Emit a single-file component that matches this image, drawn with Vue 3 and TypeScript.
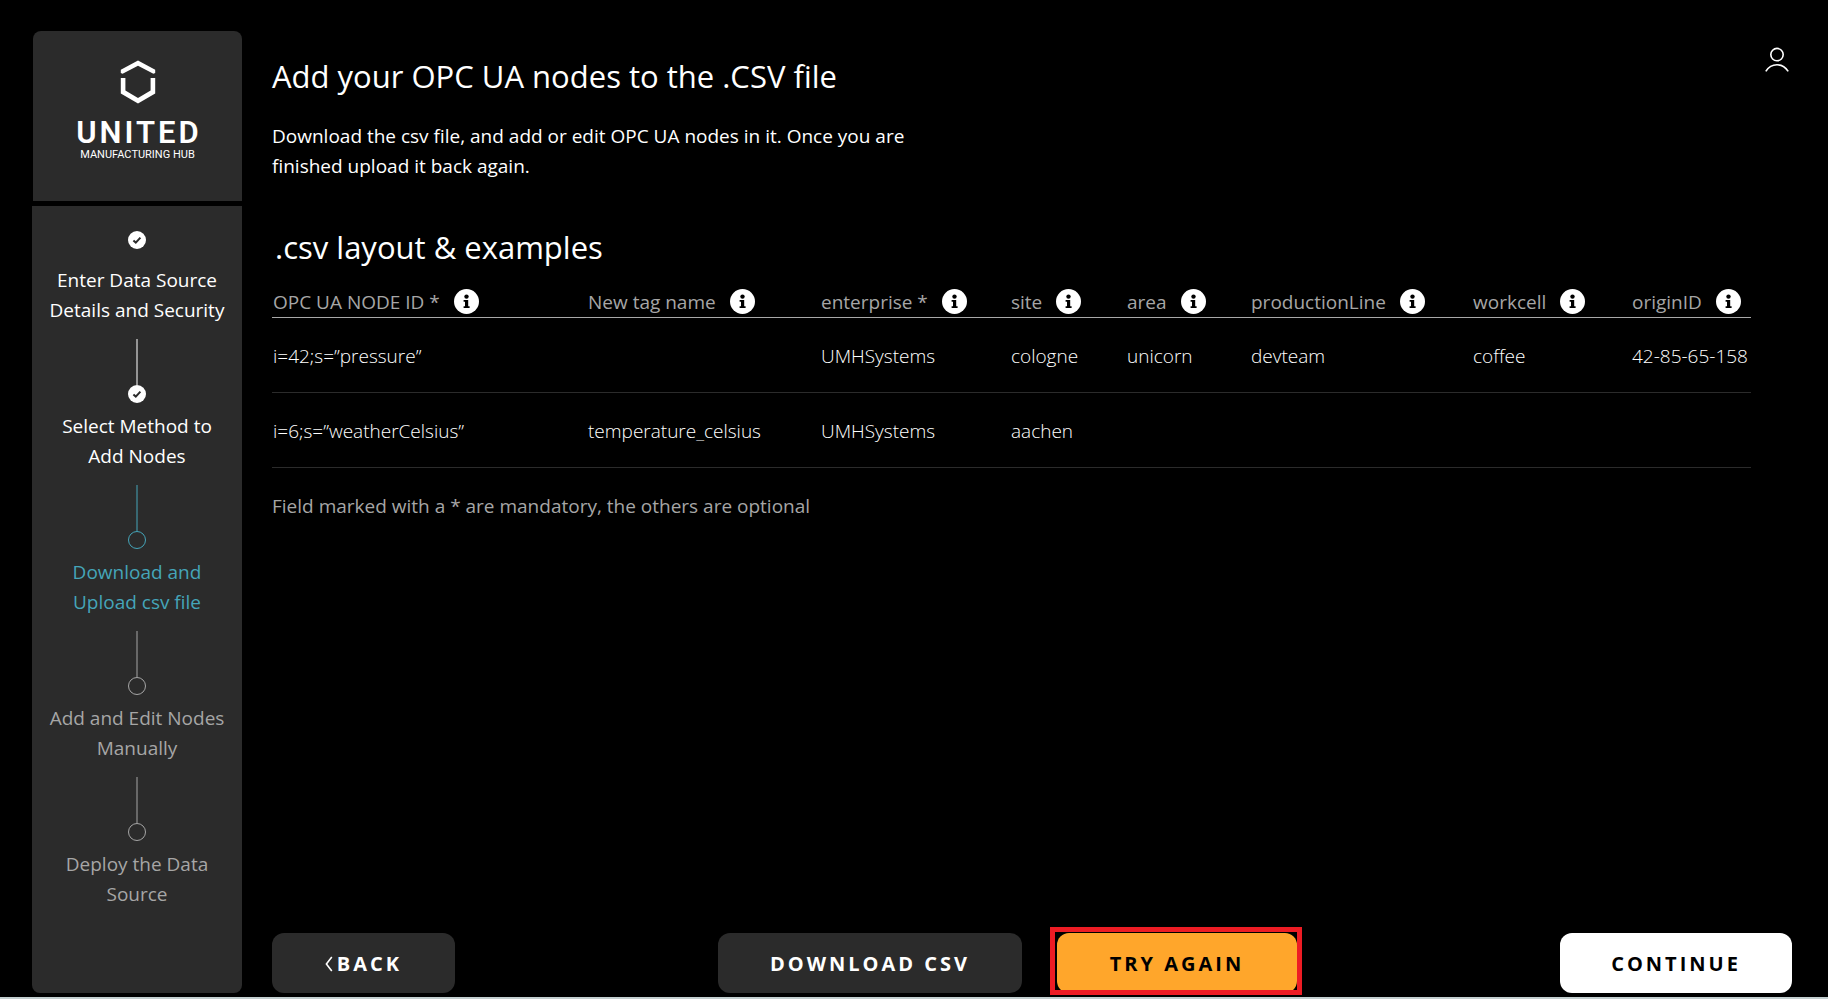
<script setup lang="ts">
type StepState = 'done' | 'current' | 'todo'

interface Step {
  label: string
  state: StepState
}

interface Column {
  key: string
  title: string
}

const steps: Step[] = [
  { label: 'Enter Data Source Details and Security', state: 'done' },
  { label: 'Select Method to Add Nodes', state: 'done' },
  { label: 'Download and Upload csv file', state: 'current' },
  { label: 'Add and Edit Nodes Manually', state: 'todo' },
  { label: 'Deploy the Data Source', state: 'todo' },
]

const columns: Column[] = [
  { key: 'node', title: 'OPC UA NODE ID *' },
  { key: 'tag', title: 'New tag name' },
  { key: 'enterprise', title: 'enterprise *' },
  { key: 'site', title: 'site' },
  { key: 'area', title: 'area' },
  { key: 'line', title: 'productionLine' },
  { key: 'workcell', title: 'workcell' },
  { key: 'origin', title: 'originID' },
]

const rows: Record<string, string>[] = [
  {
    node: 'i=42;s=”pressure”',
    enterprise: 'UMHSystems',
    site: 'cologne',
    area: 'unicorn',
    line: 'devteam',
    workcell: 'coffee',
    origin: '42-85-65-158',
  },
  {
    node: 'i=6;s=”weatherCelsius”',
    tag: 'temperature_celsius',
    enterprise: 'UMHSystems',
    site: 'aachen',
  },
]
</script>

<template>
  <div class="page">
    <aside class="sidebar">
      <div class="brand">
        <svg class="brand-mark" viewBox="0 0 36 44" aria-hidden="true">
          <path d="M0.8 13V9.8L18 0.6L35.2 9.8V13L33.4 13.8L18 5.8L2.6 13.8Z" />
          <path d="M0.8 18H5.4V30.6L18 38L30.6 30.6V18H35.2V33.6L18 43.6L0.8 33.6Z" />
        </svg>
        <span class="brand-name">UNITED</span>
        <span class="brand-sub">MANUFACTURING HUB</span>
      </div>
      <nav class="steps" aria-label="Setup steps">
        <ol>
          <li v-for="step in steps" :key="step.label" :class="['step', step.state]">
            <span class="marker">
              <svg v-if="step.state === 'done'" viewBox="0 0 18 18" aria-hidden="true">
                <path d="M5.4 9.4L7.8 11.6L12.4 6.6" />
              </svg>
            </span>
            <span class="step-label">{{ step.label }}</span>
          </li>
        </ol>
      </nav>
    </aside>

    <main class="content">
      <header class="top">
        <h1>Add your OPC UA nodes to the .CSV file</h1>
        <button class="account" type="button" aria-label="Account">
          <svg viewBox="0 0 26 26" aria-hidden="true">
            <circle cx="13" cy="7.6" r="6.2" />
            <path d="M1.8 24.4C4.4 20.2 8.4 17.8 13 17.8S21.6 20.2 24.2 24.4" />
          </svg>
        </button>
      </header>
      <p class="intro">
        Download the csv file, and add or edit OPC UA nodes in it. Once you are finished upload it
        back again.
      </p>

      <section class="examples">
        <h2>.csv layout &amp; examples</h2>
        <table>
          <colgroup>
            <col v-for="column in columns" :key="column.key" :class="'col-' + column.key" />
          </colgroup>
          <thead>
            <tr>
              <th v-for="column in columns" :key="column.key" scope="col">
                <span class="head">
                  {{ column.title }}
                  <button class="info" type="button" :aria-label="'About ' + column.title">
                    <svg viewBox="0 0 25 25" aria-hidden="true">
                      <circle class="disc" cx="12.5" cy="12.5" r="12.5" />
                      <circle cx="12.5" cy="7.6" r="2.2" />
                      <path d="M9.6 11H14.2V17.2H15.6V19H9.6V17.2H11V12.8H9.6Z" />
                    </svg>
                  </button>
                </span>
              </th>
            </tr>
          </thead>
          <tbody>
            <tr v-for="row in rows" :key="row.node">
              <td v-for="column in columns" :key="column.key">{{ row[column.key] }}</td>
            </tr>
          </tbody>
        </table>
        <p class="note">Field marked with a * are mandatory, the others are optional</p>
      </section>

      <footer class="actions">
        <button class="btn back" type="button">
          <svg viewBox="0 0 8 16" aria-hidden="true"><path d="M6.8 1L1.4 8L6.8 15" /></svg>BACK
        </button>
        <div class="group">
          <button class="btn download" type="button">DOWNLOAD CSV</button>
          <div class="highlight">
            <button class="btn retry" type="button">TRY AGAIN</button>
          </div>
        </div>
        <button class="btn continue" type="button">CONTINUE</button>
      </footer>
    </main>
  </div>
</template>

<style>
body {
  margin: 0;
  background: #000;
}
</style>

<style scoped>
.page {
  box-sizing: border-box;
  display: flex;
  gap: 30px;
  min-height: 100vh;
  padding: 31px 36px 4px 32px;
  border-bottom: 2px solid #c3cfd0;
  background: #000;
  color: #fff;
  font-family: 'Open Sans', 'Noto Sans', sans-serif;
  font-size: 19px;
  line-height: 30px;
}

h1,
h2,
p,
ol {
  margin: 0;
  padding: 0;
}

button {
  box-sizing: border-box;
  margin: 0;
  padding: 0;
  border: 0;
  background: none;
  color: inherit;
  font: inherit;
  cursor: pointer;
}

.sidebar {
  display: flex;
  flex: 0 0 210px;
  flex-direction: column;
  gap: 5px;
}

.brand {
  display: flex;
  box-sizing: border-box;
  flex-direction: column;
  align-items: center;
  height: 170px;
  margin-left: 1px;
  padding-top: 29px;
  border-radius: 8px 8px 0 0;
  background: #2b2b2b;
  font-family: Roboto, sans-serif;
}

.brand-mark {
  width: 36px;
  height: 44px;
  fill: #fff;
}

.brand-name {
  margin-top: 14px;
  padding-left: 3px;
  font-size: 31px;
  font-weight: 600;
  letter-spacing: 3px;
  line-height: 30px;
}

.brand-sub {
  font-size: 11px;
  line-height: 14px;
}

.steps {
  flex: 1;
  padding: 25px 12px;
  border-radius: 0 0 8px 8px;
  background: #2b2b2b;
}

.steps ol {
  list-style: none;
}

.step {
  display: flex;
  flex-direction: column;
  align-items: center;
  gap: 8px;
  text-align: center;
}

.step:first-child {
  gap: 16px;
}

.step + .step::before {
  width: 2px;
  height: 46px;
  margin: 14px 0 -8px;
  background: currentColor;
  content: '';
  opacity: 0.5;
}

.step.current {
  color: #45a5b9;
}

.step.todo {
  color: #a6a6a6;
}

.marker {
  box-sizing: border-box;
  width: 18px;
  height: 18px;
  border: 1px solid currentColor;
  border-radius: 50%;
}

.done .marker {
  border: 0;
  background: #fff;
}

.marker svg {
  display: block;
  fill: none;
  stroke: #2b2b2b;
  stroke-width: 2;
}

.step-label {
  max-width: 180px;
}

.content {
  display: flex;
  flex: 1;
  flex-direction: column;
  min-width: 0;
}

.top {
  display: flex;
  align-items: flex-start;
  justify-content: space-between;
}

h1,
h2 {
  font-size: 31px;
  font-weight: 400;
  line-height: 40px;
}

h1 {
  padding-top: 25px;
}

.account {
  width: 26px;
  height: 26px;
  margin: 16px 2px 0 0;
}

.account svg {
  display: block;
  fill: none;
  stroke: #fff;
  stroke-width: 1.6;
}

.intro {
  max-width: 660px;
  margin-top: 25px;
}

.examples {
  margin: 46px 41px 0 0;
}

h2 {
  padding-left: 3px;
}

table {
  width: 100%;
  margin-top: 18px;
  border-collapse: separate;
  border-spacing: 0;
  table-layout: fixed;
}

th,
td {
  box-sizing: border-box;
  padding: 1px 0 0 1px;
  text-align: left;
  white-space: nowrap;
}

th {
  height: 33px;
  border-bottom: 1px solid #a8a8a8;
  color: #a6a6a6;
  font-weight: 400;
}

td {
  height: 75px;
  border-bottom: 1px solid #2b2b2b;
  font-weight: 300;
}

.col-node {
  width: 315px;
}

.col-tag {
  width: 233px;
}

.col-enterprise {
  width: 190px;
}

.col-site {
  width: 116px;
}

.col-area {
  width: 124px;
}

.col-line {
  width: 222px;
}

.col-workcell {
  width: 159px;
}

.col-origin {
  width: 120px;
}

.head {
  display: flex;
  align-items: center;
  gap: 14px;
}

.info {
  width: 25px;
  height: 25px;
}

.info svg {
  display: block;
  fill: #000;
}

.info .disc {
  fill: #fff;
}

.note {
  margin-top: 23px;
  color: #a6a6a6;
}

.actions {
  display: flex;
  flex-wrap: wrap;
  justify-content: space-between;
  gap: 20px;
  margin-top: auto;
}

.group {
  display: flex;
  gap: 35px;
}

.btn {
  display: flex;
  align-items: center;
  justify-content: center;
  height: 60px;
  padding-top: 2px;
  border-radius: 12px;
  background: #2b2b2b;
  font-size: 20px;
  font-weight: 700;
  letter-spacing: 3px;
}

.back {
  width: 183px;
  gap: 4px;
}

.back svg {
  width: 8px;
  height: 16px;
  fill: none;
  stroke: #fff;
  stroke-width: 1.6;
}

.download {
  width: 304px;
}

.retry {
  width: 240px;
  background: #ffa62b;
  color: #000;
}

.continue {
  width: 232px;
  background: #fff;
  color: #000;
}

.highlight {
  position: relative;
}

.highlight::after {
  position: absolute;
  inset: -6px -5px -2px -7px;
  border: 5px solid #ed1c24;
  content: '';
  pointer-events: none;
}
</style>
